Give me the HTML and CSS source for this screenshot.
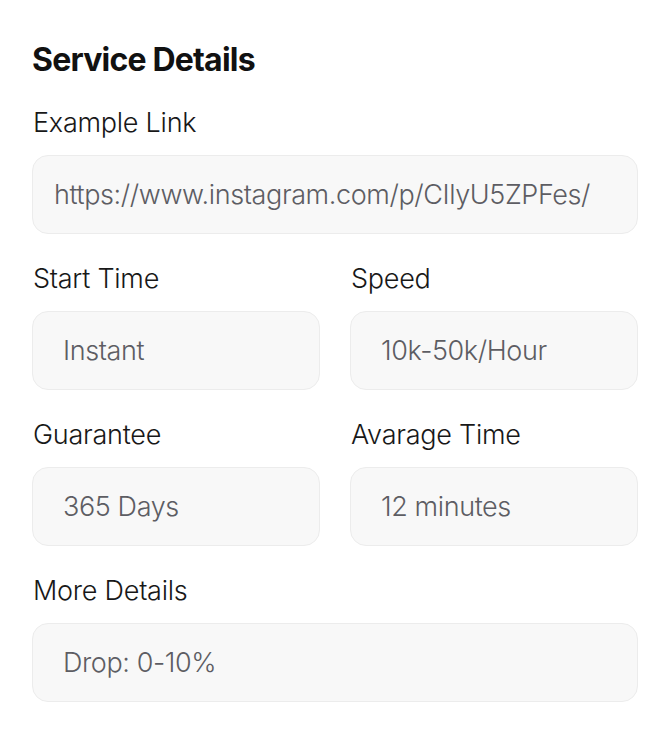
FILE: index.html
```html
<!DOCTYPE html>
<html>
<head>
<meta charset="utf-8">
<link rel="stylesheet" href="styles.css">
</head>
<body>
<section class="details">
  <h2 class="title">Service Details</h2>
  <div class="field">
    <div class="label">Example Link</div>
    <div class="box box-link">https://www.instagram.com/p/CIlyU5ZPFes/</div>
  </div>
  <div class="grid">
    <div class="field">
      <div class="label">Start Time</div>
      <div class="box">Instant</div>
    </div>
    <div class="field">
      <div class="label">Speed</div>
      <div class="box">10k-50k/Hour</div>
    </div>
    <div class="field">
      <div class="label">Guarantee</div>
      <div class="box">365 Days</div>
    </div>
    <div class="field">
      <div class="label">Avarage Time</div>
      <div class="box">12 minutes</div>
    </div>
  </div>
  <div class="field">
    <div class="label">More Details</div>
    <div class="box">Drop: 0-10%</div>
  </div>
</section>
</body>
</html>
```
FILE: styles.css
```css
html, body {
  margin: 0;
  padding: 0;
  background: #ffffff;
}
body {
  font-family: Inter, "Liberation Sans", sans-serif;
  color: #141414;
}
.details {
  padding: 42px 32px 0 32px;
  display: flex;
  flex-direction: column;
  gap: 29px;
}
.title {
  margin: 0;
  font-size: 32px;
  font-weight: 700;
  line-height: 36px;
  letter-spacing: -0.8px;
  color: #111111;
}
.field {
  display: flex;
  flex-direction: column;
  gap: 16px;
}
.label {
  font-size: 27px;
  line-height: 32px;
  font-weight: 300;
  letter-spacing: -0.25px;
  color: #181818;
  padding-left: 1px;
}
.box {
  height: 79px;
  box-sizing: border-box;
  border: 1px solid #ececec;
  background: #f8f8f8;
  border-radius: 16px;
  display: flex;
  align-items: center;
  padding: 0 30px;
  font-size: 27px;
  font-weight: 300;
  letter-spacing: -0.4px;
  color: #5d5d63;
}
.box-link {
  padding: 0 21px;
}
.grid {
  display: grid;
  grid-template-columns: 1fr 1fr;
  column-gap: 30px;
  row-gap: 29px;
}
```
